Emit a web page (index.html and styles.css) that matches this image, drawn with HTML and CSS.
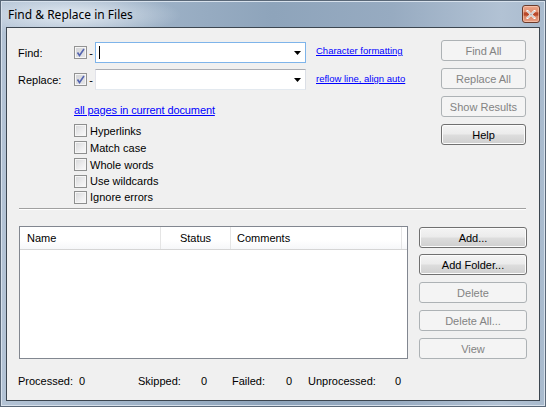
FILE: index.html
```html
<!DOCTYPE html>
<html>
<head>
<meta charset="utf-8">
<link rel="stylesheet" href="styles.css">
</head>
<body>
<div class="window">
  <div class="titlebar">
    <span class="title">Find &amp; Replace in Files</span>
    <span class="close">
      <svg width="10" height="9" viewBox="0 0 10 9"><path d="M1.5 1 L8.5 8 M8.5 1 L1.5 8" stroke="#fff" stroke-width="2.2" stroke-linecap="square"/><path d="M1.5 1 L8.5 8 M8.5 1 L1.5 8" stroke="#6b6b6b" stroke-width="0.6" fill="none"/></svg>
    </span>
  </div>
  <div class="client">
    <div class="top">
      <div class="form">
        <div class="row">
          <span class="label">Find:</span>
          <span class="cb checked"><svg width="11" height="11" viewBox="0 0 11 11"><path d="M2.5 5.5 L4.5 8.5 L9 2" stroke="#5565b0" stroke-width="1.6" fill="none"/></svg></span>
          <span class="dash">-</span>
          <div class="combo focus"><span class="caret"></span><svg class="arrow" width="7" height="4" viewBox="0 0 7 4"><polygon points="0,0 7,0 3.5,4" fill="#000"/></svg></div>
          <a class="link small">Character formatting</a>
        </div>
        <div class="row row2">
          <span class="label">Replace:</span>
          <span class="cb checked"><svg width="11" height="11" viewBox="0 0 11 11"><path d="M2.5 5.5 L4.5 8.5 L9 2" stroke="#5565b0" stroke-width="1.6" fill="none"/></svg></span>
          <span class="dash">-</span>
          <div class="combo"><svg class="arrow" width="7" height="4" viewBox="0 0 7 4"><polygon points="0,0 7,0 3.5,4" fill="#000"/></svg></div>
          <a class="link small">reflow line, align auto</a>
        </div>
        <div class="scope"><a class="link">all pages in current document</a></div>
        <div class="opts">
          <div class="opt"><span class="cb"></span><span>Hyperlinks</span></div>
          <div class="opt"><span class="cb"></span><span>Match case</span></div>
          <div class="opt"><span class="cb"></span><span>Whole words</span></div>
          <div class="opt short"><span class="cb"></span><span>Use wildcards</span></div>
          <div class="opt short"><span class="cb"></span><span>Ignore errors</span></div>
        </div>
      </div>
      <div class="btncol">
        <div class="btn disabled">Find All</div>
        <div class="btn disabled">Replace All</div>
        <div class="btn disabled">Show Results</div>
        <div class="btn">Help</div>
      </div>
    </div>
    <div class="sep"></div>
    <div class="bottom">
      <div class="list">
        <div class="header">
          <div class="col c-name">Name</div>
          <div class="col c-status">Status</div>
          <div class="col c-comments">Comments</div>
          <div class="col c-rest"></div>
        </div>
      </div>
      <div class="btncol2">
        <div class="btn wide first">Add...</div>
        <div class="btn wide">Add Folder...</div>
        <div class="btn wide disabled">Delete</div>
        <div class="btn wide disabled">Delete All...</div>
        <div class="btn wide disabled">View</div>
      </div>
    </div>
    <div class="status">
      <span>Processed:</span><span>0</span>
      <span>Skipped:</span><span>0</span>
      <span>Failed:</span><span>0</span>
      <span>Unprocessed:</span><span>0</span>
    </div>
  </div>
</div>
</body>
</html>
```

FILE: styles.css
```css
* { box-sizing: border-box; }
html, body { margin: 0; padding: 0; }
body {
  width: 546px;
  height: 407px;
  overflow: hidden;
  font-family: "Liberation Sans", Arial, sans-serif;
  font-size: 11px;
  color: #000;
}
.window {
  width: 546px;
  height: 407px;
  border: 1px solid #5a6878;
  padding: 0 5px 5px 5px;
  display: flex;
  flex-direction: column;
  background:
    radial-gradient(ellipse 110px 22px at 70px 14px, rgba(236,242,248,0.85), rgba(236,242,248,0) 100%),
    linear-gradient(90deg, #b3c3d5 0%, #9fb3c8 25%, #8ea4bb 50%, #97abc1 72%, #b2c2d4 92%, #a9bbce 100%);
  box-shadow: inset 0 0 0 1px #d7e1ec;
}
.titlebar {
  height: 26px;
  flex: none;
  display: flex;
  align-items: center;
  padding-left: 2px;
}
.title {
  font-family: "Noto Sans", "Open Sans", sans-serif;
  font-size: 12px;
  color: #000;
  margin-top: 1px;
}
.close {
  margin-left: auto;
  width: 18px;
  height: 18px;
  border: 1px solid #6b3b2c;
  border-radius: 3px;
  background: linear-gradient(180deg, #eda58a 0%, #e08e6e 38%, #b8482a 42%, #b8482a 58%, #d9805f 62%, #e6a086 100%);
  display: flex;
  align-items: center;
  justify-content: center;
  box-shadow: inset 0 0 0 1px rgba(255,220,200,0.5);
}
.client {
  flex: 1;
  border: 1px solid #3c4650;
  background: #f0f0f0;
  display: flex;
  flex-direction: column;
}
.top {
  display: flex;
  align-items: flex-start;
  padding: 12px 0 0 11px;
}
.form { margin-top: 2px; display: flex; flex-direction: column; }
.row { display: flex; align-items: center; height: 21px; }
.row2 { margin-top: 6px; }
.label { width: 56px; }
.cb {
  width: 13px;
  height: 13px;
  border: 1px solid #8e8f8f;
  background: linear-gradient(135deg, #d6d7d9 0%, #eeeeef 60%, #fafafa 100%);
  box-shadow: inset 0 0 0 1px #f6f6f6;
  display: inline-flex;
  align-items: center;
  justify-content: center;
  flex: none;
}
.cb.checked { background: linear-gradient(135deg, #d4d5d8 0%, #e6e6e8 100%); border-color: #939393; }
.dash { width: 8px; text-align: center; }
.combo {
  width: 211px;
  height: 21px;
  background: #fff;
  border: 1px solid;
  border-color: #abadb3 #dbdfe6 #e3e9ef #e2e3ea;
  display: flex;
  align-items: center;
  padding: 0 4px 0 3px;
}
.combo.focus { border-color: #7eb4ea; }
.caret { width: 1px; height: 13px; background: #000; }
.arrow { margin-left: auto; }
.link {
  color: #0000ff;
  text-decoration: underline;
  margin-left: 10px;
  white-space: nowrap;
}
.link.small { font-size: 9.5px; margin-top: -4px; }
.row2 .link.small { margin-top: -2px; }
.scope { margin-top: 12px; padding-left: 56px; line-height: 16px; height: 16px; }
.scope .link { margin-left: 0; letter-spacing: -0.12px; }
.opts { margin-top: 4px; padding-left: 56px; display: flex; flex-direction: column; }
.opt { height: 17px; display: flex; align-items: center; }
.opt.short { height: 16px; }
.opt .cb { margin-right: 3px; }
.btncol {
  margin-left: auto;
  margin-right: 13px;
  display: flex;
  flex-direction: column;
  gap: 7px;
}
.btn {
  width: 85px;
  height: 21px;
  border: 1px solid #707070;
  border-radius: 3px;
  background: linear-gradient(180deg, #f4f4f4 0%, #ebebeb 48%, #dddddd 52%, #cfcfcf 100%);
  box-shadow: inset 0 0 0 1px #fcfcfc;
  display: flex;
  align-items: center;
  justify-content: center;
  color: #000;
}
.btn.disabled {
  border-color: #adb2b5;
  background: #f4f4f4;
  box-shadow: none;
  color: #838383;
}
.btn.wide { width: 108px; }
.sep {
  margin: 3px 13px 0 12px;
  border-top: 1px solid #a0a0a0;
  border-bottom: 1px solid #ffffff;
}
.bottom {
  display: flex;
  align-items: flex-start;
  margin-top: 16px;
  padding-left: 12px;
}
.list {
  width: 389px;
  height: 133px;
  border: 1px solid #828790;
  background: #fff;
}
.header {
  display: flex;
  height: 23px;
  border-bottom: 1px solid #d5d5d5;
  background: linear-gradient(180deg, #ffffff 0%, #ffffff 60%, #f6f7f9 100%);
}
.col {
  height: 22px;
  display: flex;
  align-items: center;
  border-right: 1px solid #e5e5e5;
}
.c-name { width: 141px; padding-left: 7px; }
.c-status { width: 70px; justify-content: center; }
.c-comments { width: 171px; padding-left: 6px; }
.c-rest { flex: 1; border-right: none; }
.btncol2 {
  margin-left: 11px;
  margin-top: 1px;
  display: flex;
  flex-direction: column;
  gap: 7px;
}
.btncol2 .first { margin-bottom: -1px; }
.status {
  margin-top: 15px;
  padding-left: 11px;
  display: grid;
  grid-template-columns: 61px 59px 63px 31px 54px 22px 87px auto;
  line-height: 14px;
}
```
